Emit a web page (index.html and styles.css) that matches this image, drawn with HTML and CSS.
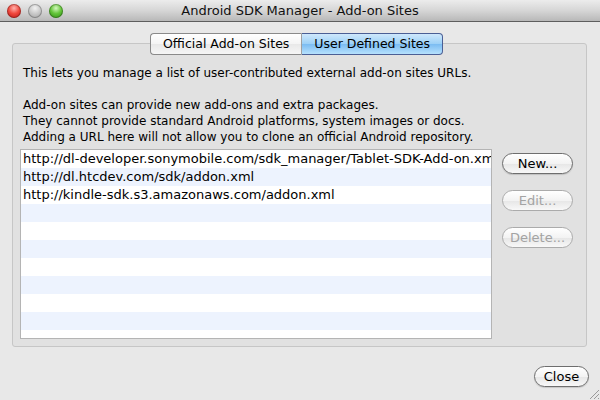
FILE: index.html
```html
<!DOCTYPE html>
<html lang="en">
<head>
    <meta charset="UTF-8">
    <title>Android SDK Manager - Add-on Sites</title>
    <link rel="stylesheet" href="styles.css">
</head>
<body>
    <div class="window">
        <div class="titlebar">
            <div class="lights">
                <span class="light red"></span>
                <span class="light gray"></span>
                <span class="light green"></span>
            </div>
            <div class="title">Android SDK Manager - Add-on Sites</div>
        </div>

        <div class="group">
            <div class="tabs">
                <div class="tab">Official Add-on Sites</div>
                <div class="tab selected">User Defined Sites</div>
            </div>

            <div class="info">
                <p>This lets you manage a list of user-contributed external add-on sites URLs.</p>
                <p>&nbsp;</p>
                <p>Add-on sites can provide new add-ons and extra packages.</p>
                <p>They cannot provide standard Android platforms, system images or docs.</p>
                <p>Adding a URL here will not allow you to clone an official Android repository.</p>
            </div>

            <div class="sites">
                <div class="list">
                    <div class="row">http://dl-developer.sonymobile.com/sdk_manager/Tablet-SDK-Add-on.xml</div>
                    <div class="row">http://dl.htcdev.com/sdk/addon.xml</div>
                    <div class="row">http://kindle-sdk.s3.amazonaws.com/addon.xml</div>
                    <div class="row"></div>
                    <div class="row"></div>
                    <div class="row"></div>
                    <div class="row"></div>
                    <div class="row"></div>
                    <div class="row"></div>
                    <div class="row"></div>
                    <div class="row"></div>
                </div>
                <div class="actions">
                    <button class="pill">New...</button>
                    <button class="pill" disabled>Edit...</button>
                    <button class="pill" disabled>Delete...</button>
                </div>
            </div>
        </div>

        <div class="footer">
            <button class="pill close">Close</button>
        </div>

        <svg class="grip" width="12" height="12" viewBox="0 0 12 12">
            <line x1="11" y1="2" x2="2" y2="11" stroke="#9a9a9a" stroke-width="1"/>
            <line x1="11" y1="6" x2="6" y2="11" stroke="#9a9a9a" stroke-width="1"/>
            <line x1="11" y1="10" x2="10" y2="11" stroke="#9a9a9a" stroke-width="1"/>
        </svg>
    </div>
</body>
</html>
```

FILE: styles.css
```css
body {
    margin: 0;
    font-family: "DejaVu Sans", Verdana, sans-serif;
    font-size: 12px;
    color: #000;
    background-color: #e8e8e8;
}
.window {
    position: relative;
    width: 600px;
    height: 400px;
    overflow: hidden;
    background-color: #e8e8e8;
}
.titlebar {
    position: relative;
    height: 21px;
    border-bottom: 1px solid #5e5e5e;
    background: linear-gradient(#ececec, #d6d6d6 50%, #b8b8b8);
    display: flex;
    align-items: center;
    justify-content: center;
}
.lights {
    position: absolute;
    left: 7px;
    top: 4px;
    display: flex;
    gap: 7px;
}
.light {
    width: 14px;
    height: 14px;
    border-radius: 50%;
    box-shadow: inset 0 0 0 1px rgba(0,0,0,0.25);
}
.red {
    background: radial-gradient(circle at 50% 30%, #ffb3ad 0, #f0493e 45%, #b51210 100%);
}
.gray {
    background: radial-gradient(circle at 50% 30%, #f2f2f2 0, #c6c6c6 50%, #a0a0a0 100%);
}
.green {
    background: radial-gradient(circle at 50% 30%, #d5f8bf 0, #64c53a 45%, #2c8a10 100%);
}
.title {
    font-size: 13px;
    color: #111;
}
.group {
    margin: 21px 13px 0 12px;
    height: 302px;
    border: 1px solid #c6c6c6;
    border-radius: 3px;
    background-color: #e1e1e1;
    padding: 0 13px 0 7px;
}
.tabs {
    display: flex;
    justify-content: center;
    margin-top: -11px;
}
.tab {
    height: 20px;
    line-height: 20px;
    padding: 0 12px;
    border: 1px solid #8a8a8a;
    background: linear-gradient(#ffffff, #f4f4f4 50%, #e8e8e8 51%, #f6f6f6);
    font-size: 12.5px;
}
.tab:first-child {
    border-radius: 4px 0 0 4px;
    border-right: 1px solid #a0a0a0;
}
.tab.selected {
    border-left: none;
    border-color: #4b5f95;
    border-radius: 0 4px 4px 0;
    background: linear-gradient(#cfe8fc, #9bd0f7 50%, #7bbcf2 51%, #b6e1fd);
}
.info {
    margin-top: 10px;
    padding-left: 3px;
}
.info p {
    margin: 0;
    line-height: 16px;
}
.sites {
    display: flex;
    gap: 10px;
    margin-top: 4px;
}
.list {
    width: 470px;
    height: 188px;
    border: 1px solid #b4b4b4;
    background-color: #fff;
    overflow: hidden;
}
.row {
    height: 18px;
    line-height: 18px;
    padding-left: 2px;
    white-space: nowrap;
    overflow: hidden;
    font-size: 13px;
}
.row:nth-child(even) {
    background-color: #edf3fe;
}
.actions {
    display: flex;
    flex-direction: column;
    gap: 16px;
    padding-top: 4px;
}
.pill {
    width: 71px;
    height: 21px;
    border: 1px solid #6e6e6e;
    border-radius: 11px;
    background: linear-gradient(#ffffff, #f3f3f3 50%, #e6e6e6 51%, #f8f8f8);
    font-family: "DejaVu Sans", Verdana, sans-serif;
    font-size: 13px;
    color: #000;
    padding: 0;
    box-shadow: 0 1px 1px rgba(0,0,0,0.15);
}
.pill:disabled {
    color: #a3a3a3;
    border-color: #ababab;
    box-shadow: none;
}
.footer {
    display: flex;
    justify-content: flex-end;
    padding: 19px 11px 0 0;
}
.close {
    width: 55px;
}
.grip {
    position: absolute;
    right: 0;
    bottom: 0;
}
```
